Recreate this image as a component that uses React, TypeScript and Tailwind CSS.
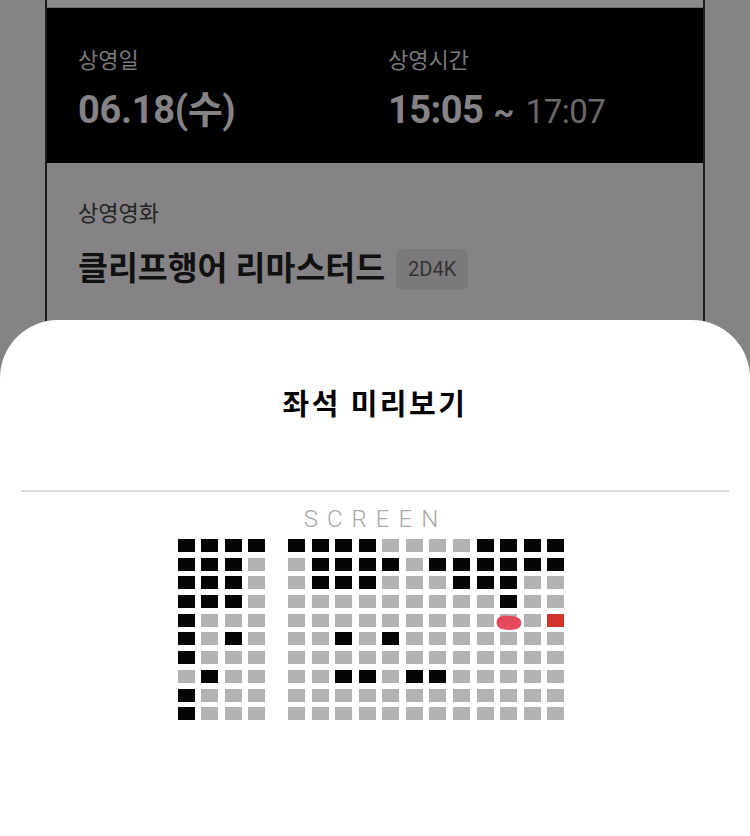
import React from "react";

const LEFT = [
  "BBBB",
  "BBBG",
  "BBBG",
  "BBBG",
  "BGGG",
  "BGBG",
  "BGGG",
  "GBGG",
  "BGGG",
  "BGGG",
];

const RIGHT = [
  "BBBBGGGGBBBB",
  "GBBBBGBBBBBB",
  "GBBBGGGBBBGG",
  "GGGGGGGGGBGG",
  "GGGGGGGGGGGR",
  "GGBGBGGGGGGG",
  "GGGGGGGGGGGG",
  "GGBBGBBGGGGG",
  "GGGGGGGGGGGG",
  "GGGGGGGGGGGG",
];

function Seat({ s }: { s: string }) {
  const color =
    s === "B" ? "bg-[#050505]" : s === "R" ? "bg-[#d2342b]" : "bg-[#b3b1b4]";
  return <div className={`w-[17px] h-[13px] ${color}`} />;
}

function Block({ rows }: { rows: string[] }) {
  return (
    <div className="flex flex-col gap-y-[5.7px]">
      {rows.map((row, i) => (
        <div key={i} className="flex gap-x-[6.6px]">
          {row.split("").map((s, j) => (
            <Seat key={j} s={s} />
          ))}
        </div>
      ))}
    </div>
  );
}

export default function App() {
  return (
    <div
      className="relative w-[750px] h-[836px] overflow-hidden bg-[#858385]"
      style={{ fontFamily: '"Roboto", "Noto Sans CJK KR", sans-serif' }}
    >
      {/* dimmed ticket card */}
      <div className="mx-[45px] border-x-2 border-[#1c1c1c] h-[420px]">
        <div className="h-[8px] bg-[#8b898b] border-b border-[#6d6b6d]" />
        <div className="bg-black h-[155px] pt-[38px] pl-[31px] flex">
          <div className="w-[310px]">
            <div className="text-[22px] leading-[1.4] text-[#7a787a]">상영일</div>
            <div className="mt-[11px] text-[38px] leading-[1.2] font-bold text-[#858385] tracking-[-0.3px]">
              06.18(수)
            </div>
          </div>
          <div>
            <div className="text-[22px] leading-[1.4] text-[#7a787a]">상영시간</div>
            <div className="mt-[11px] text-[38px] leading-[1.2] font-bold text-[#858385] tracking-[-0.5px] flex items-baseline">
              <span>15:05</span>
              <span className="ml-[10px] text-[32px]">~</span>
              <span className="ml-[12px] text-[33px] font-normal text-[#6a686a]">17:07</span>
            </div>
          </div>
        </div>
        <div className="pt-[36px] pl-[31px]">
          <div className="text-[22px] leading-[1.4] text-[#232323]">상영영화</div>
          <div className="mt-[19px] flex items-center">
            <span className="text-[32.5px] leading-[41px] font-bold text-[#111111]">
              클리프행어 리마스터드
            </span>
            <span className="ml-[11px] h-[41px] px-[12px] rounded-[6px] bg-[#7b797b] text-[#333333] text-[20px] flex items-center">
              2D4K
            </span>
          </div>
        </div>
      </div>

      {/* bottom sheet */}
      <div className="absolute left-0 right-0 top-[320px] bottom-0 bg-white rounded-t-[58px]">
        <div className="pt-[66px] text-center text-[29px] leading-[39px] font-bold text-black tracking-[2.5px]">
          좌석 미리보기
        </div>
        <div className="mt-[65px] mx-[21px] h-[2px] bg-[#dcdcdc]" />
        <div className="mt-[12px] flex justify-center pr-[8px]">
          <span className="text-[24px] leading-[30px] font-light text-[#a9a9a9] tracking-[9px] mr-[-9px]">
            SCREEN
          </span>
        </div>
        <div className="mt-[5px] flex justify-center pr-[8px]">
          <div className="relative flex gap-x-[22.6px]">
            <Block rows={LEFT} />
            <Block rows={RIGHT} />
            <svg
              className="absolute left-[317px] top-[75px]"
              width="27"
              height="17"
              viewBox="0 0 27 17"
            >
              <path
                d="M2 6 C3 2 9 1 14 2 C19 2 24 3 25.5 6 C27 9 26 13 23 14.5 C18 16.5 12 16 7 15 C3 14 0.5 10 2 6 Z"
                fill="#e6485c"
              />
            </svg>
          </div>
        </div>
      </div>
    </div>
  );
}
